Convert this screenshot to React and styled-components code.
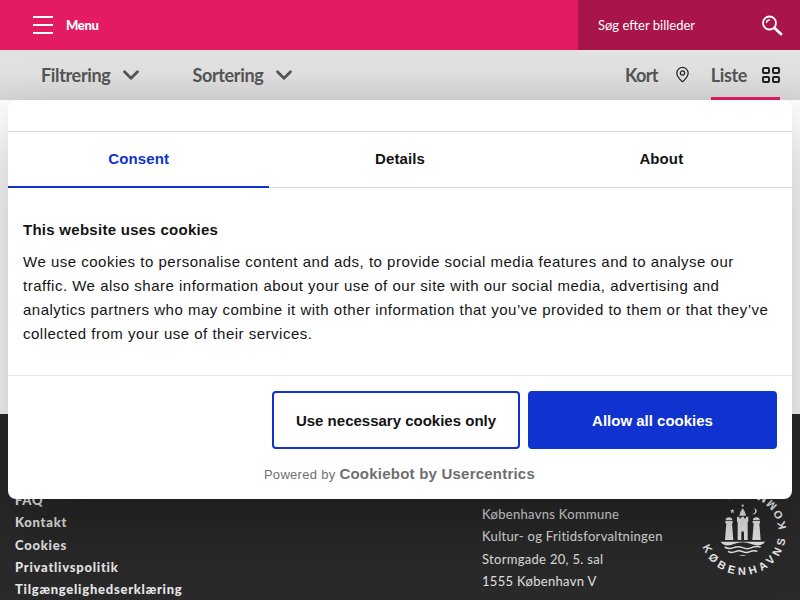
import React from "react";
import styled, { createGlobalStyle } from "styled-components";
import { MapPin, ChevronDown } from "lucide-react";

const Global = createGlobalStyle`
  html, body { margin: 0; padding: 0; }
  body { width: 800px; height: 600px; overflow: hidden; font-family: "Lato", sans-serif; background: #fff; }
`;
const Page = styled.div`
  position: relative; width: 800px; height: 600px; overflow: hidden;
  display: flex; flex-direction: column;
`;
const TopBar = styled.header`
  height: 50px; background: #e31b63; display: flex; justify-content: space-between; flex: none;
  position: relative; z-index: 2;
`;
const MenuButton = styled.div`
  display: flex; align-items: center; gap: 13px; padding-left: 33px; color: #fff;
  font-weight: 900; font-size: 13px; letter-spacing: -0.3px; line-height: 48px;
`;
const Burger = styled.div`
  width: 20px; height: 18px; display: flex; flex-direction: column; justify-content: space-between;
  span { display: block; height: 2px; background: #fff; }
`;
const SearchBox = styled.div`
  width: 222px; background: #a9154a; color: #fff; display: flex; align-items: center;
  justify-content: space-between; padding: 0 17px 0 20px; box-sizing: border-box; font-size: 13px;
`;
const ToolBar = styled.div`
  height: 50px; flex: none; background: linear-gradient(#e2e2e2, #e0e0e0 50%, #d6d6d6);
  display: flex; justify-content: space-between; color: #555; font-weight: 700; font-size: 18px;
  box-sizing: border-box; padding: 0 20px 0 41px;
`;
const Group = styled.div`
  display: flex; align-items: stretch; gap: ${p => p.$gap}px;
`;
const ToolItem = styled.div`
  display: flex; align-items: center; gap: ${p => p.$gap}px; box-sizing: border-box;
  padding: 2px 0 0; border-bottom: 3px solid ${p => (p.$active ? "#e31b63" : "transparent")};
  color: #555; letter-spacing: ${p => p.$track || -0.35}px;
`;
const Body = styled.div`
  height: 314px; flex: none; background: #fff;
`;
const Footer = styled.footer`
  flex: 1; background: #2a2a2a; color: #eee;
  display: grid; grid-template-columns: 467px 216px 1fr; padding: 75px 0 0 15px;
`;
const LinkList = styled.div`
  display: flex; flex-direction: column; font-weight: 900; font-size: 13px; letter-spacing: 0.75px;
  line-height: 22.3px; color: #e8e8e8;
`;
const Address = styled.div`
  display: flex; flex-direction: column; font-size: 13px; letter-spacing: 0.3px; line-height: 22.3px;
  color: #e2e2e2; padding-top: 14px;
`;
const Logo = styled.svg`
  display: block; margin-top: -2px;
`;
const Dialog = styled.div`
  position: absolute; left: 8px; top: 100px; width: 784px; height: 399px; background: #fff;
  border-radius: 8px; display: flex; flex-direction: column; font-family: "Liberation Sans", Arial, sans-serif;
  color: #141414; box-shadow: 0 32px 68px rgba(0, 0, 0, 0.3);
`;
const Tabs = styled.div`
  margin-top: 31px; height: 57px; flex: none; display: grid; grid-template-columns: repeat(3, 1fr);
  border-top: 1px solid #d6d6d6; border-bottom: 1px solid #d6d6d6; box-sizing: border-box;
`;
const Tab = styled.div`
  display: flex; align-items: center; justify-content: center; font-weight: 700; font-size: 15px;
  letter-spacing: 0.1px; margin-bottom: -1px; padding-bottom: 1px;
  color: ${p => (p.$active ? "#1032cf" : "#141414")};
  border-bottom: 2px solid ${p => (p.$active ? "#1032cf" : "transparent")};
`;
const Content = styled.div`
  flex: 1; padding: 33px 15px 0 15px; border-bottom: 1px solid #e6e6e6;
`;
const Title = styled.h2`
  margin: 0 0 11px; font-size: 15px; line-height: 18px; font-weight: 700; letter-spacing: 0.27px;
`;
const Text = styled.p`
  margin: 0; font-size: 15px; line-height: 24px; letter-spacing: 0.5px;
`;
const Actions = styled.div`
  height: 123px; flex: none; box-sizing: border-box; padding: 15px 15px 0; display: flex; flex-direction: column;
`;
const Buttons = styled.div`
  display: flex; justify-content: flex-end; gap: 8px;
`;
const Btn = styled.div`
  width: ${p => (p.$primary ? 249 : 248)}px; height: 58px; box-sizing: border-box; border: 2px solid #1032cf; border-radius: 4px;
  display: flex; align-items: center; justify-content: center; font-weight: 700; font-size: 15px;
  background: ${p => (p.$primary ? "#1032cf" : "#fff")};
  color: ${p => (p.$primary ? "#fff" : "#141414")};
`;
const Powered = styled.div`
  margin-top: 15px; text-align: right; padding-right: 242px; font-size: 13px; color: #6f6f6f; letter-spacing: 0.3px;
  line-height: 20px;
  b { font-size: 15px; letter-spacing: 0.22px; }
`;
const GridIcon = () => (
  <svg width="18" height="16" viewBox="0 0 18 16" fill="none" stroke="#222" strokeWidth="2">
    <rect x="1" y="1" width="6" height="5" rx="1" /><rect x="11" y="1" width="6" height="5" rx="1" />
    <rect x="1" y="10" width="6" height="5" rx="1" /><rect x="11" y="10" width="6" height="5" rx="1" />
  </svg>
);
const Magnifier = () => (
  <svg width="24" height="24" viewBox="0 0 24 24" fill="none" stroke="#fff" strokeLinecap="round">
    <circle cx="10.500" cy="10" r="6.500" strokeWidth="1.800" />
    <path d="M15.500 15l6.500 6" strokeWidth="2.800" />
    <path d="M7.500 9.500a3 3 0 0 1 3-2.500" strokeWidth="1.300" />
  </svg>
);
const Arms = () => (
  <Logo width="90" height="90" viewBox="0 0 90 90">
    <defs><path id="ring" d="M4.600 59.700 A43 43 0 1 0 4.600 30.300" /></defs>
    <text fontFamily="Liberation Sans, sans-serif" fontWeight="700" fontSize="11" fill="#eee" letterSpacing="3.900">
      <textPath href="#ring">KØBENHAVNS KOMMUNE</textPath>
    </text>
    <g transform="translate(-18 -7) scale(0.3333)" fill="#eee">
      <circle cx="188" cy="77" r="3.500" />
      <path d="M178 107 Q180 95 188 84 Q196 95 198 107 Z" />
      <path d="M171 110h7v5h6v-5h8v5h6v-5h7v16h-2v54h-11v-22a4 4 0 0 0 -8 0v22h-11v-54h-2z" />
      <path d="M137 120a10 8 0 0 1 20 0v1h-20z" />
      <path d="M136 123h22v7h-2l4 50h-25l4 -50h-3z" />
      <path d="M219 120a10 8 0 0 1 20 0v1h-20z" />
      <path d="M218 123h22v7h-2l4 50h-25l4 -50h-3z" />
      <path d="M157 86l2 5 5 .4-4 3.200 1.400 5-4.400-2.800-4.400 2.800 1.400-5-4-3.200 5-.4z" />
      <path d="M219 85a9 9 0 1 1 -3 16 a8 8 0 0 0 3 -16z" />
      <path d="M122 185H255 Q249 195 238 196 Q225 197 214 192 Q188 182 162 192 Q151 197 139 196 Q128 195 122 185z" />
      <path d="M188 224l-12 3 h24z" />
    </g>
    <g transform="translate(-18 -7) scale(0.3333)" fill="none" stroke="#eee" strokeWidth="4.500">
      <path d="M134 201 q13 8 27 2 q13 -6 27 0 q14 6 27 0 q13 -6 27 -2" />
      <path d="M144 214 q11 6 22 1 q11 -5 22 0 q11 5 22 0 q11 -5 22 -1" />
    </g>
  </Logo>
);
export default function App() {
  return (
    <Page>
      <Global />
      <TopBar>
        <MenuButton><Burger><span /><span /><span /></Burger>Menu</MenuButton>
        <SearchBox>Søg efter billeder<Magnifier /></SearchBox>
      </TopBar>
      <ToolBar>
        <Group $gap={48}>
          <ToolItem $gap={8}>Filtrering<ChevronDown size={26} strokeWidth={2.6} /></ToolItem>
          <ToolItem $gap={8}>Sortering<ChevronDown size={26} strokeWidth={2.6} /></ToolItem>
        </Group>
        <Group $gap={20}>
          <ToolItem $gap={16} $track={-0.7}>Kort<MapPin size={17} color="#222" strokeWidth={1.7} /></ToolItem>
          <ToolItem $gap={15} $active>Liste<GridIcon /></ToolItem>
        </Group>
      </ToolBar>
      <Body />
      <Footer>
        <LinkList>
          <span>FAQ</span><span>Kontakt</span><span>Cookies</span><span>Privatlivspolitik</span><span>Tilgængelighedserklæring</span>
        </LinkList>
        <Address>
          <span>Københavns Kommune</span><span>Kultur- og Fritidsforvaltningen</span><span>Stormgade 20, 5. sal</span><span>1555 København V</span>
        </Address>
        <Arms />
      </Footer>
      <Dialog>
        <Tabs>
          <Tab $active>Consent</Tab><Tab>Details</Tab><Tab>About</Tab>
        </Tabs>
        <Content>
          <Title>This website uses cookies</Title>
          <Text>We use cookies to personalise content and ads, to provide social media features and to analyse our traffic. We also share information about your use of our site with our social media, advertising and analytics partners who may combine it with other information that you’ve provided to them or that they’ve collected from your use of their services.</Text>
        </Content>
        <Actions>
          <Buttons><Btn>Use necessary cookies only</Btn><Btn $primary>Allow all cookies</Btn></Buttons>
          <Powered>Powered by <b>Cookiebot by Usercentrics</b></Powered>
        </Actions>
      </Dialog>
    </Page>
  );
}
